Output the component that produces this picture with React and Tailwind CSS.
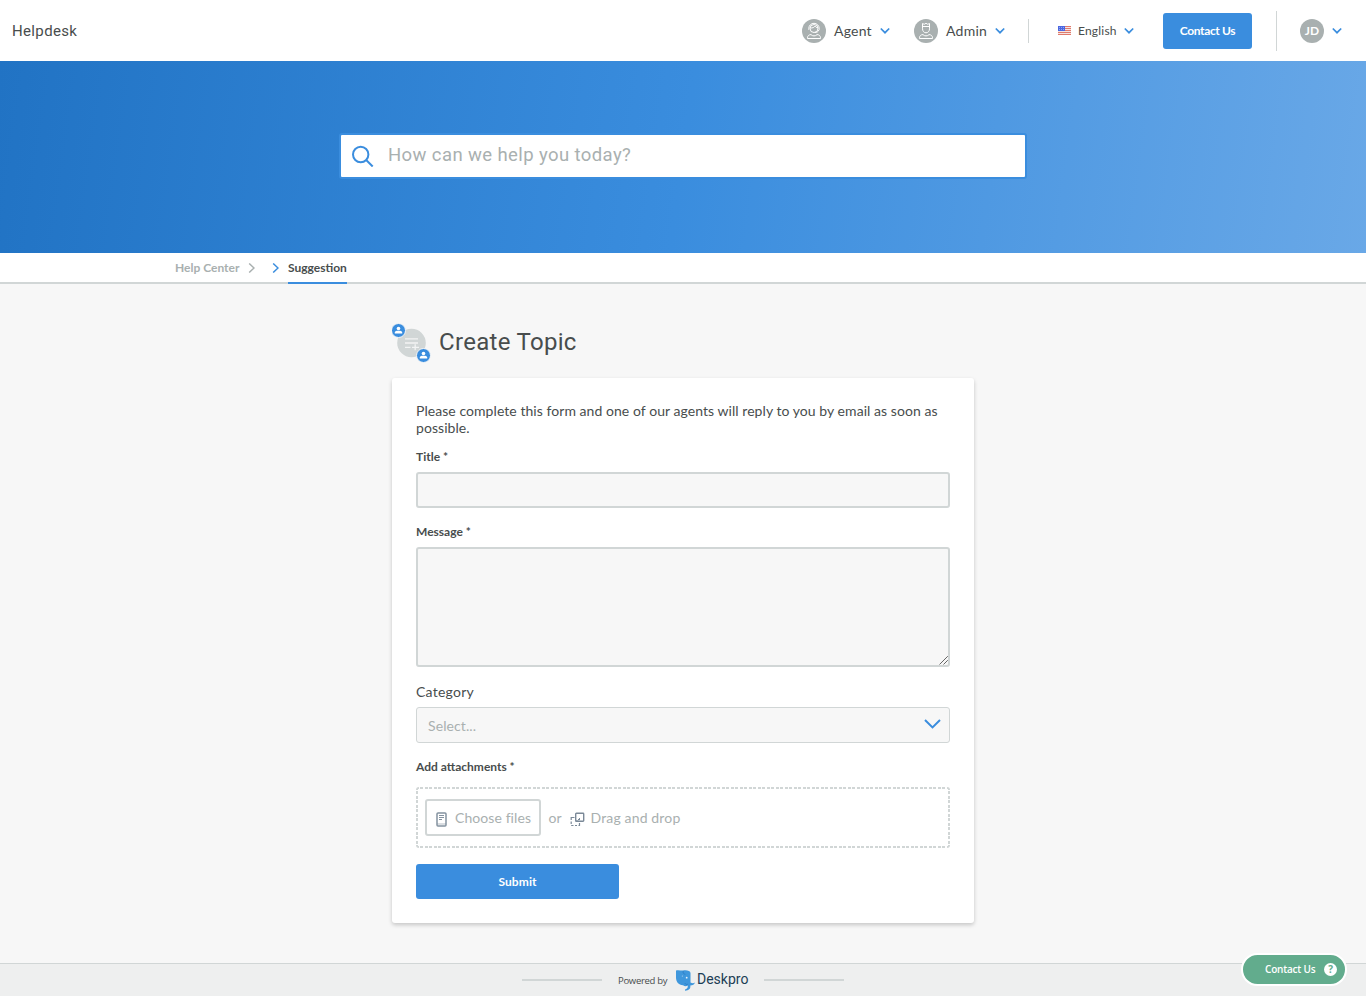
import React from "react";

const Chevron = ({ className, color = "#3a8dde", d = "M.8 1.500 5 5.700 9.200 1.500", box = "0 0 10 7", sw = 1.7 }) => (
  <svg className={className} viewBox={box} fill="none" stroke={color} strokeWidth={sw}>
    <path d={d} />
  </svg>
);

const AgentIcon = () => (
  <svg className="h-6 w-6 shrink-0" viewBox="0 0 24 24" fill="none" stroke="#fff" strokeWidth="1">
    <circle cx="12" cy="12" r="12" fill="#a9b0b0" stroke="none" />
    <circle cx="12" cy="9.5" r="4" />
    <path d="M6.800 10.800V9.500a5.200 5.200 0 0 1 10.400 0v1.300M8.200 9c2.200.2 4-.6 5-2 .6 1.200 1.400 1.800 2.700 2M16.800 11c-.4 1.700-1.800 2.500-3.800 2.500" />
    <path d="M5.500 19.500v-.7c0-1.900 1.400-3.200 3.500-3.200.8.900 1.700 1.300 3 1.300s2.200-.4 3-1.300c2.100 0 3.500 1.300 3.500 3.200v.7z" />
  </svg>
);

const AdminIcon = () => (
  <svg className="h-6 w-6 shrink-0" viewBox="0 0 24 24" fill="none" stroke="#fff" strokeWidth="1">
    <circle cx="12" cy="12" r="12" fill="#a9b0b0" stroke="none" />
    <path d="M8.500 4.500 10.200 5.300 12 4.300l1.800 1 1.700-.8v5.300c0 2.300-1.500 4-3.500 4s-3.500-1.700-3.500-4zM8.500 7.500h7" />
    <path d="M5.500 19.500v-.7c0-1.900 1.400-3.200 3.500-3.200.8.900 1.700 1.300 3 1.300s2.200-.4 3-1.300c2.100 0 3.500 1.300 3.500 3.200v.7z" />
  </svg>
);

const Flag = () => (
  <svg className="h-[9px] w-[13px] shrink-0" viewBox="0 0 13 9">
    <rect width="13" height="9" fill="#f6e3e0" />
    <path d="M0 .5h13M0 2.500h13M0 4.500h13M0 6.500h13M0 8.500h13" stroke="#e07a6c" />
    <rect width="7" height="5" fill="#4b67e0" />
    <path d="M1 1.500h5M1 3.500h5" stroke="#8ea3f2" strokeDasharray="1 1" />
  </svg>
);

const Person = ({ x, y }) => (
  <g transform={`translate(${x} ${y})`}>
    <circle r="7" fill="#3a8dde" stroke="#f7f7f7" strokeWidth="1" />
    <circle cy="-2" r="1.800" fill="#fff" />
    <path d="M-3.700 3V2C-3.700.7-2 .3 0 .3s3.700.4 3.700 1.700v1z" fill="#fff" />
  </g>
);

const TopicIcon = () => (
  <svg className="h-10 w-10 shrink-0" viewBox="0 0 40 40" fill="none">
    <circle cx="19.500" cy="20" r="14.300" fill="#d1d6d6" />
    <path d="M13 15.900h13M13 20h13M13 24.400h5.500M20 24.400h7M23.200 21.300v6" stroke="#f3f4f4" strokeWidth="1.300" />
    <Person x={6.5} y={7.5} />
    <Person x={31.5} y={32.5} />
  </svg>
);

const FileIcon = () => (
  <svg className="h-[15px] w-[11px] shrink-0" viewBox="0 0 11 15" fill="none" stroke="#8492a0">
    <rect x="1" y="1" width="9" height="13" rx="1" strokeWidth="1.500" />
    <path d="M3 3.500h5M3 5.500h5M3 7.500h3" />
    <path d="M1 12h9" strokeWidth=".6" />
  </svg>
);

const DragIcon = () => (
  <svg className="h-[15px] w-[15px] shrink-0" viewBox="0 0 15 15" fill="none" stroke="#7b8998">
    <rect x="5.700" y="1.200" width="8" height="8" rx=".7" strokeWidth="1.400" />
    <path d="M4.500 5.500H1.200V8M1.200 9.500V12M1.200 13.500H3.500M5 13.500h2M8.500 13.500h1V11M5.500 9.200h3" strokeWidth="1.200" />
    <path d="M8 7.500h2M9.500 6v2" />
  </svg>
);

const Logo = () => (
  <svg className="h-[21px] w-[19px] shrink-0" viewBox="0 0 19 21">
    <path d="M0 .5C3-.2 5 .8 7 .5c3-.8 7.500.1 7.500 2.500v9.500c1.600.9 3 .9 4.500.1-.6 2-2.200 2.900-4.700 2.900.4 3-.6 5-5.300 5.200v-1.300c2.200-.2 3-1.600 2.700-3.900-1.500 1-3 .8-4.700-.2C2.500 14.900 0 12 0 7.500z" fill="#3f97dc" />
    <path d="M7.300 1c-.8 1.700.2 3 2 3.300M8.800 13.200c1 1.300 2 1.500 3.200.9" fill="none" stroke="#2877bd" strokeWidth=".7" />
    <circle cx="10.700" cy="7.700" r=".9" fill="#e9f3fb" />
    <circle cx="6.300" cy="6" r=".5" fill="#c7e1f6" />
  </svg>
);

export default function App() {
  return (
    <div className="flex h-[998px] flex-col overflow-hidden bg-white font-['Lato',sans-serif] text-[#484d4d]">
      <header className="flex h-[61px] shrink-0 items-center bg-white pl-3 pr-6">
        <div className="mt-px font-['Roboto',sans-serif] text-[15px] tracking-[0.35px]">Helpdesk</div>
        <nav className="ml-auto flex items-center">
          <AgentIcon />
          <span className="ml-2 w-[46px] whitespace-nowrap text-sm tracking-[0.2px]">Agent</span>
          <Chevron className="h-[7px] w-[10px]" />
          <span className="ml-6 flex"><AdminIcon /></span>
          <span className="ml-2 w-[49px] whitespace-nowrap text-sm tracking-[0.25px]">Admin</span>
          <Chevron className="h-[7px] w-[10px]" />
          <span className="ml-[23px] h-6 w-px bg-[#d1d6d6]" />
          <span className="ml-[29px] flex"><Flag /></span>
          <span className="ml-[7px] w-[46px] whitespace-nowrap text-xs tracking-[0.2px]">English</span>
          <Chevron className="h-[7px] w-[10px]" />
          <button className="ml-[29px] h-9 w-[89px] rounded-[3px] bg-[#3a8dde] text-xs font-bold tracking-[-0.35px] text-white">Contact Us</button>
          <span className="ml-6 h-10 w-px bg-[#d1d6d6]" />
          <span className="ml-[23px] flex h-6 w-6 items-center justify-center rounded-full bg-[#a9b0b0] text-xs font-bold text-white">JD</span>
          <span className="ml-2"><Chevron className="h-[7px] w-[10px]" /></span>
        </nav>
      </header>

      <section className="flex h-48 shrink-0 justify-center bg-[linear-gradient(98deg,#2173c4_0%,#3a8dde_50%,#69a8e7_100%)] pt-[72px]">
        <div className="flex h-[46px] w-[688px] items-center rounded-[3px] border-2 border-[#3a8dde] bg-white pl-[11px]">
          <svg className="h-[22px] w-[22px]" viewBox="0 0 22 22" fill="none" stroke="#3a8dde" strokeWidth="2">
            <circle cx="8.700" cy="9.500" r="7.700" />
            <path d="m14.200 15 6.500 6.500" />
          </svg>
          <span className="ml-[14px] font-['Roboto',sans-serif] text-[18.5px] tracking-[0.4px] text-[#a9b0b0]">How can we help you today?</span>
        </div>
      </section>

      <div className="flex h-[31px] shrink-0 border-b-2 border-[#d1d6d6] bg-white pl-[175px] text-xs font-bold leading-[30px]">
        <span className="w-[73px] whitespace-nowrap text-[#a9b0b0]">Help Center</span>
        <Chevron className="mt-[10px] h-[10px] w-[7px]" color="#a9b0b0" box="0 0 7 10" d="M1.200.5 6 5 1.200 9.500" sw={1.5} />
        <Chevron className="ml-[17px] mt-[10px] h-[10px] w-[7px]" box="0 0 7 10" d="M1.200.5 6 5 1.200 9.500" sw={1.5} />
        <span className="ml-[9px] h-[31px] w-[59px] whitespace-nowrap border-b-2 border-[#3a8dde]">Suggestion</span>
      </div>

      <main className="flex h-[679px] shrink-0 flex-col items-center bg-[#f7f7f7]">
        <div className="flex h-[94px] w-[582px] pt-[39px]">
          <TopicIcon />
          <h1 className="ml-[7px] font-['Roboto',sans-serif] text-2xl leading-[38px] tracking-[0.3px]">Create Topic</h1>
        </div>
        <form className="flex h-[545px] w-[582px] flex-col rounded-[3px] bg-white px-6 pt-6 shadow-[0_2px_4px_rgba(0,0,0,0.2)]">
          <p className="h-[34px] whitespace-nowrap text-sm leading-[17px] tracking-[0.055px]">
            Please complete this form and one of our agents will reply to you by email as soon as
            <br />
            possible.
          </p>
          <div className="mt-[13px] h-[15px] text-xs font-bold leading-[15px]">Title *</div>
          <div className="mt-2 h-9 rounded-[3px] border-2 border-[#d1d6d6] bg-[#f7f7f7]" />
          <div className="mt-4 h-[15px] text-xs font-bold leading-[15px]">Message *</div>
          <div className="mt-2 flex h-[120px] items-end justify-end rounded-[3px] border-2 border-[#d1d6d6] bg-[#f7f7f7]">
            <svg className="h-[10px] w-[10px]" viewBox="0 0 10 10" stroke="#555" strokeWidth=".9">
              <path d="M1.500 9.500 9.800 1.200M5.500 9.500l4.300-4.300" />
            </svg>
          </div>
          <div className="mt-4 h-[18px] text-sm leading-[18px] tracking-[0.25px]">Category</div>
          <div className="mt-[6px] flex h-9 justify-between rounded-[3px] border border-[#d1d6d6] bg-[#f7f7f7] pl-[11px] pr-2 text-sm leading-[36px] tracking-[0.1px] text-[#a9b0b0]">
            Select...
            <Chevron className="mt-[11px] h-[11px] w-[17px]" box="0 0 17 11" d="M1 1 8.500 8.400 16 1" sw={2} />
          </div>
          <div className="mt-4 h-[15px] text-xs font-bold leading-[15px]">Add attachments *</div>
          <div className="mt-[13px] flex h-[61px] shrink-0 items-center rounded-[3px] bg-[repeating-linear-gradient(90deg,#d1d6d6_0_2.7px,transparent_2.7px_4.5px),repeating-linear-gradient(90deg,#d1d6d6_0_2.7px,transparent_2.7px_4.5px),repeating-linear-gradient(180deg,#d1d6d6_0_2.7px,transparent_2.7px_4.5px),repeating-linear-gradient(180deg,#d1d6d6_0_2.7px,transparent_2.7px_4.5px)] bg-[length:100%_2px,100%_2px,2px_100%,2px_100%] bg-[position:0_0,0_100%,0_0,100%_0] bg-no-repeat pl-[9px] text-sm text-[#a9b0b0]">
            <div className="flex h-[37px] w-[116px] items-center whitespace-nowrap rounded-[3px] border-2 border-[#d1d6d6] pl-[9px]">
              <span className="mt-[3px]"><FileIcon /></span>
              <span className="ml-2 tracking-[0.08px]">Choose files</span>
            </div>
            <span className="ml-[7.500px] w-[21px]">or</span>
            <span className="ml-[0.500px] mt-[3px]"><DragIcon /></span>
            <span className="ml-[5.500px] tracking-[0.15px]">Drag and drop</span>
          </div>
          <button className="mt-4 h-[35px] w-[203px] shrink-0 rounded-[3px] bg-[#3a8dde] text-xs font-bold tracking-[0.1px] text-white">Submit</button>
        </form>
      </main>

      <footer className="relative flex h-[33px] shrink-0 items-center border-t border-[#d1d6d6] bg-[#eeefef] pl-[522px]">
        <span className="h-[2px] w-20 bg-[#d1d6d6]" />
        <span className="ml-4 mt-0.5 w-[58px] whitespace-nowrap font-['Open_Sans',sans-serif] text-[9.500px] tracking-[-0.3px]">Powered by</span>
        <Logo />
        <span className="-mt-0.5 ml-[2px] w-[67px] font-['Roboto',sans-serif] text-sm text-[#1c3e55]">Deskpro</span>
        <span className="h-[2px] w-20 bg-[#d1d6d6]" />
        <button className="absolute right-[19px] top-[-11px] flex h-[33px] w-[106px] items-center rounded-full border-2 border-white bg-[#62ac8d] pl-[22px] font-['Open_Sans',sans-serif] text-[10px] font-semibold tracking-[-0.2px] text-white">
          <span className="w-[59px] whitespace-nowrap text-left">Contact Us</span>
          <span className="flex h-[13px] w-[13px] items-center justify-center rounded-full bg-white text-[10px] font-bold text-[#62ac8d]">?</span>
        </button>
      </footer>
    </div>
  );
}
